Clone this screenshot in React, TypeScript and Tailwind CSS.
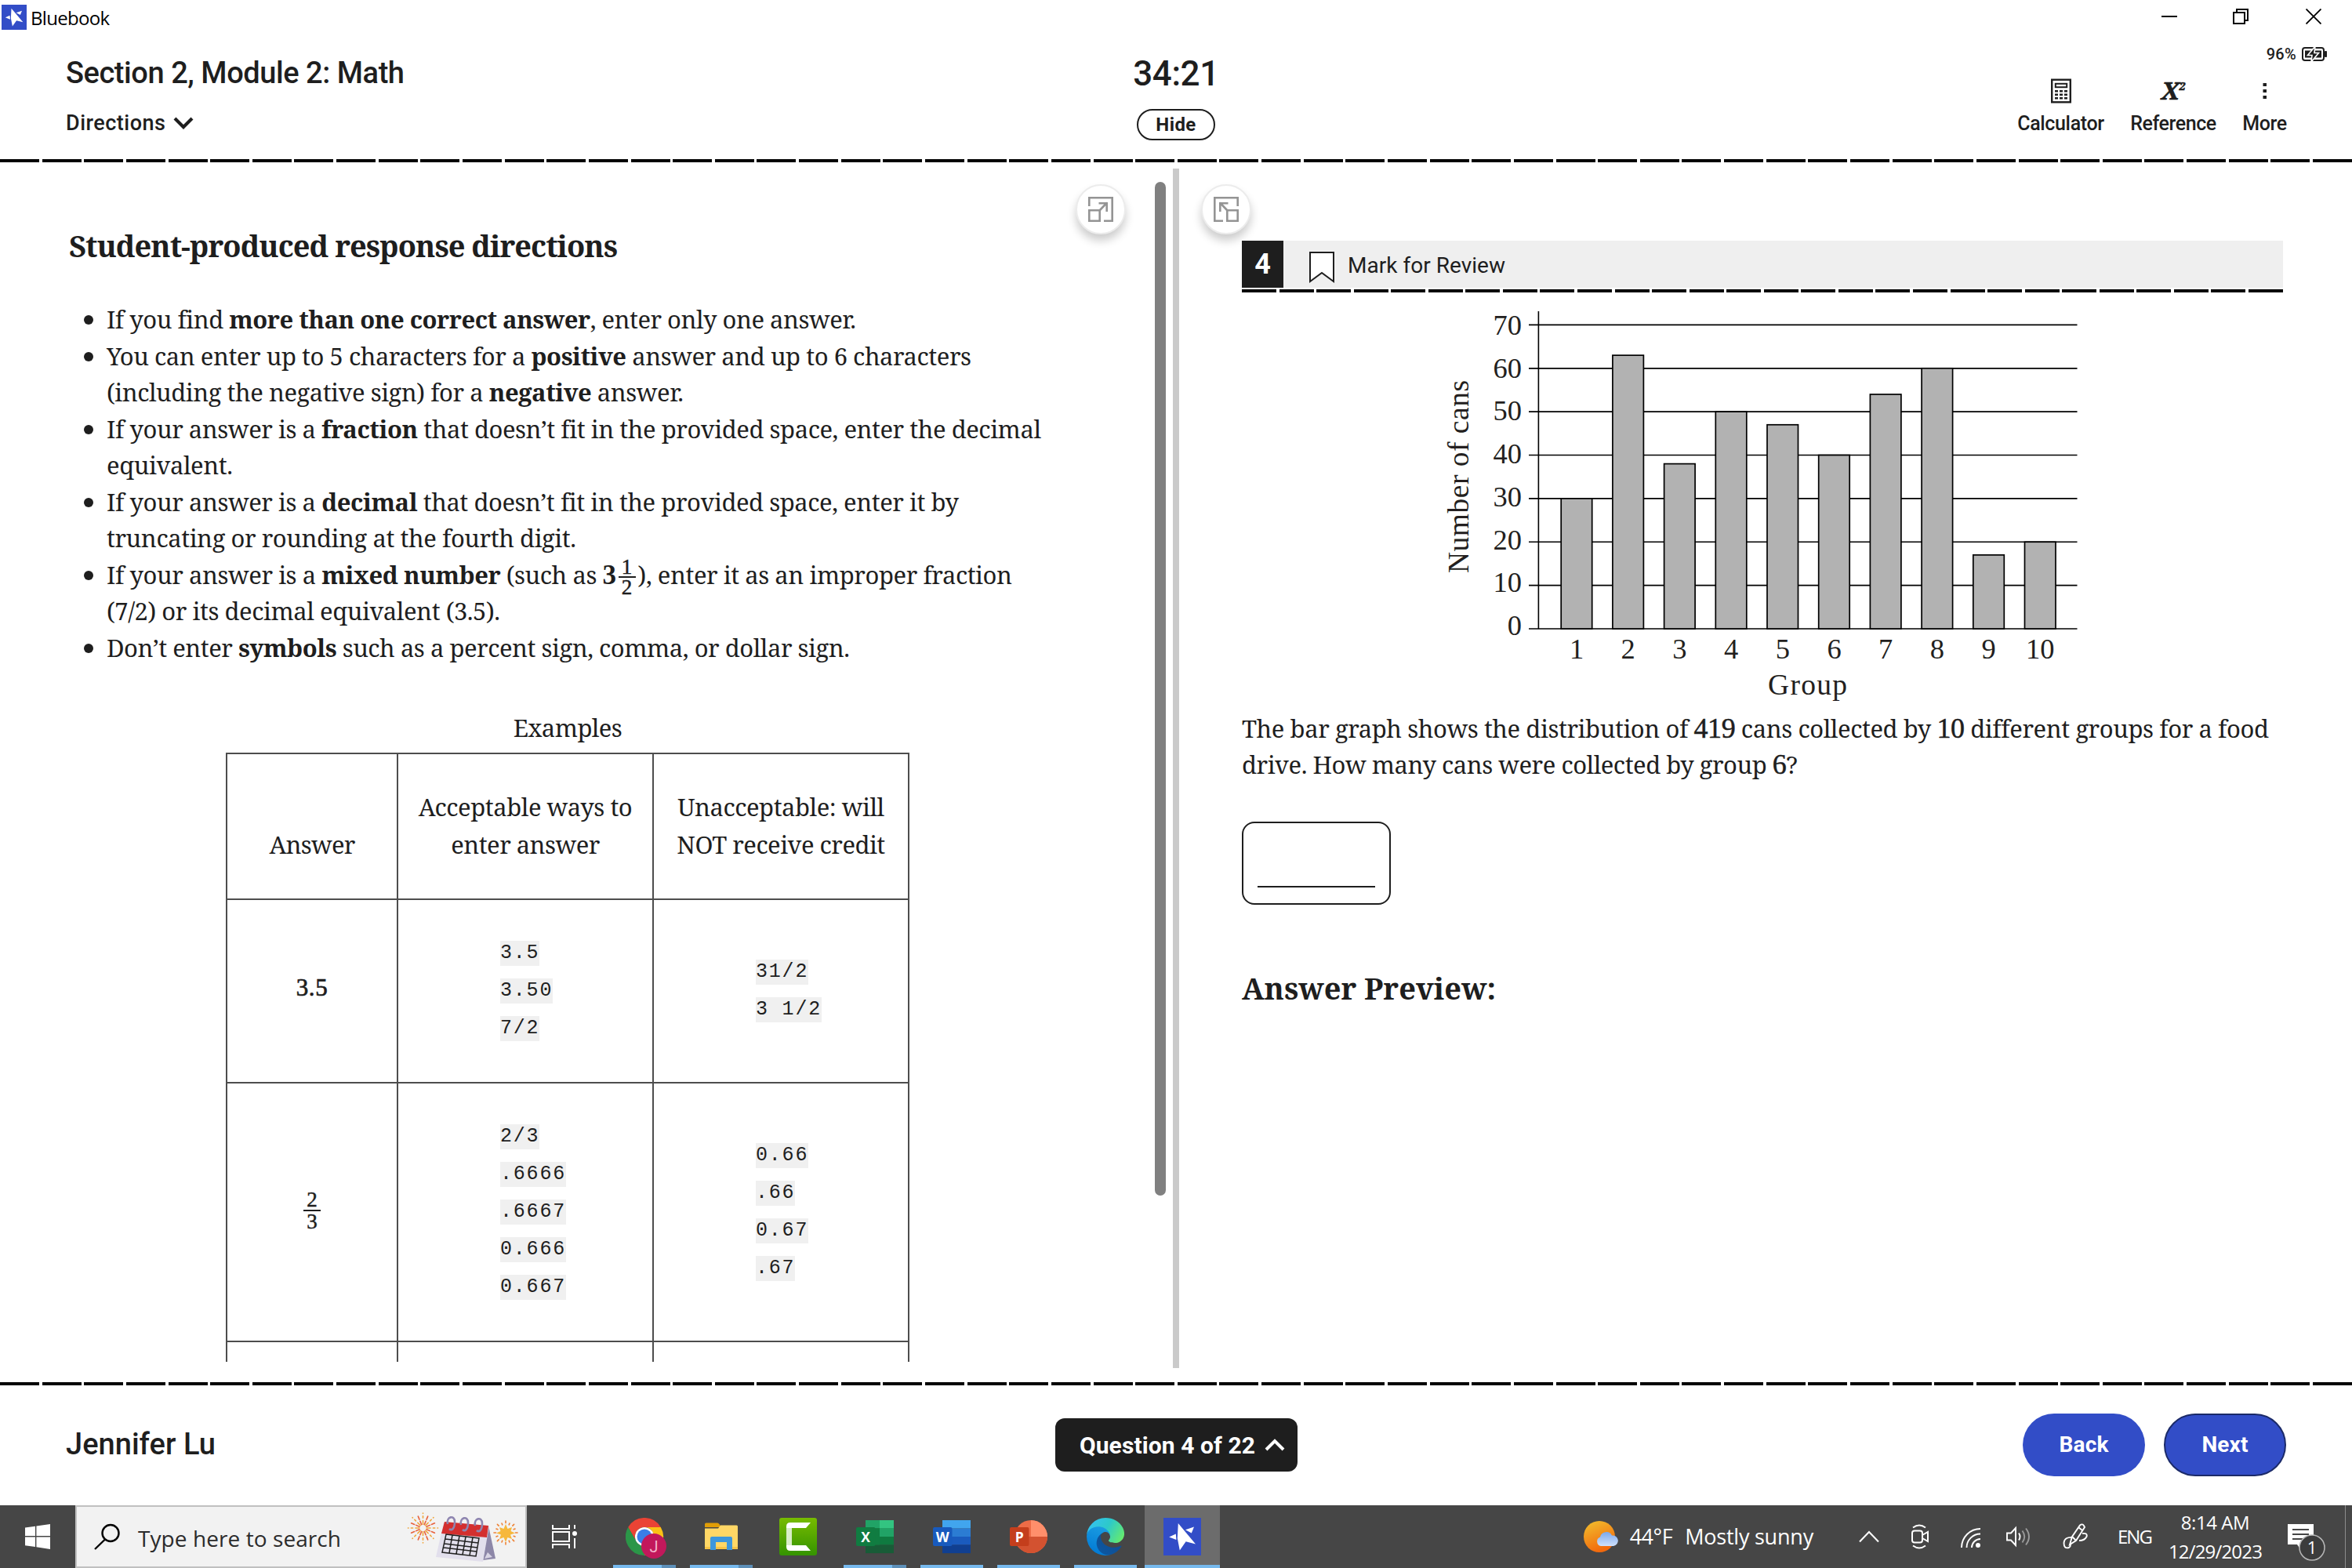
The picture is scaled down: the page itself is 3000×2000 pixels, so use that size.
import React, { useLayoutEffect, useRef } from "react";

type FitProps = { w: number; className?: string; children: React.ReactNode };

/** One line of text, tracked so that it fills exactly `w` pixels. */
function Fit({ w, className = "", children }: FitProps) {
  const ref = useRef<HTMLSpanElement>(null);
  useLayoutEffect(() => {
    const el = ref.current;
    if (!el) return;
    const count = Math.max(1, (el.textContent ?? "").length - 1);
    let spacing = 0;
    el.style.letterSpacing = "0px";
    for (let i = 0; i < 3; i++) {
      spacing += (w + spacing - el.getBoundingClientRect().width) / count;
      el.style.letterSpacing = `${spacing}px`;
    }
  }, [w]);
  return (
    <span ref={ref} className={`inline-block whitespace-pre ${className}`}>
      {children}
    </span>
  );
}

function Star({ className }: { className: string }) {
  return (
    <svg viewBox="0 0 48 48" className={className}>
      <rect width="48" height="48" fill="#324dc7" />
      <g fill="#fff">
        <path d="M18.8 7 41 33.4 28.6 30.2 20.8 41.4 17.8 26Z" />
        <path d="M7.2 24.4 15.8 20.6 16.4 28Z" />
        <path d="M39 11.6 35.8 19.6 28 15.2Z" />
      </g>
    </svg>
  );
}

function TitleBar() {
  return (
    <div className="flex h-[44px] shrink-0 items-center pl-[2px] font-['Open_Sans',sans-serif] text-black">
      <Star className="h-8 w-8" />
      <Fit w={101} className="ml-[5px] mt-[2px] text-[24px] leading-[42px]">Bluebook</Fit>
      <div className="mb-[2px] ml-auto mr-[39px] flex items-center">
        <svg viewBox="0 0 20 20" className="h-5 w-5" stroke="#000" strokeWidth="2">
          <path d="M0 10H20" />
        </svg>
        <svg viewBox="0 0 20 20" className="ml-[71px] h-5 w-5" fill="none" stroke="#000" strokeWidth="2">
          <path d="M1 5H15V19H1ZM5 5V1H19V15H15" />
        </svg>
        <svg viewBox="0 0 20 20" className="ml-[73px] h-5 w-5" stroke="#000" strokeWidth="1.8">
          <path d="M.5 .5 19.5 19.5M19.5 .5 .5 19.5" />
        </svg>
      </div>
    </div>
  );
}

function Header() {
  return (
    <header className="grid h-[159px] shrink-0 grid-cols-[1fr_200px_1fr] font-medium text-[#1e1e1e]">
      <div className="flex flex-col pl-[84px] pt-[23px]">
        <Fit w={432} className="self-start text-[38px] leading-[52px]">Section 2, Module 2: Math</Fit>
        <div className="mt-[16px] flex items-center">
          <Fit w={127} className="text-[27px] leading-[44px]">Directions</Fit>
          <svg viewBox="0 0 26 16" className="ml-[9px] h-4 w-[26px]" fill="none" stroke="#1e1e1e" strokeWidth="4.2">
            <path d="M2 2 13 13 24 2" />
          </svg>
        </div>
      </div>
      <div className="flex flex-col items-center pt-[23px]">
        <Fit w={110} className="text-[44px] leading-[54px]">34:21</Fit>
        <div className="mt-[18px] flex h-[40px] w-[100px] items-center justify-center rounded-full border-2 border-[#1e1e1e] font-bold">
          <Fit w={51} className="text-[24px] leading-[36px]">Hide</Fit>
        </div>
      </div>
      <div className="flex flex-col items-end">
        <div className="mr-[32px] mt-[13px] flex h-[24px] items-center">
          <Fit w={38} className="mr-[7px] text-[20px] leading-[24px]">96%</Fit>
          <svg viewBox="0 0 32 18" className="h-[18px] w-8">
            <rect x="1" y="1" width="27" height="16" rx="3" fill="none" stroke="#1e1e1e" strokeWidth="2" />
            <rect x="29" y="5" width="3" height="8" rx="1" fill="#1e1e1e" />
            <rect x="4" y="4.500" width="21" height="9" fill="#1e1e1e" />
            <path d="M17 -1 7.500 10.500H13L12 19 21.500 7.500H16Z" fill="#1e1e1e" stroke="#fff" strokeWidth="1.600" />
          </svg>
        </div>
        <div className="mr-[83px] mt-[19px] flex text-[25px] leading-[34px]">
          <div className="flex w-[111px] flex-col items-center">
            <svg viewBox="0 0 26 32" className="h-8 w-[26px]" fill="#1e1e1e">
              <rect x="1.200" y="1.700" width="23.600" height="28.600" fill="none" stroke="#1e1e1e" strokeWidth="2.400" />
              <rect x="5.800" y="6.800" width="14.400" height="4.400" fill="none" stroke="#1e1e1e" strokeWidth="2" />
              <path d="M5 15H9V17.500H5ZM11 15H15V17.500H11ZM17 15H21V17.500H17ZM5 19.500H9V22H5ZM11 19.500H15V22H11ZM17 19.500H21V22H17ZM5 24H9V26.500H5ZM11 24H15V26.500H11ZM17 24H21V26.500H17Z" />
            </svg>
            <Fit w={111} className="mt-[9px]">Calculator</Fit>
          </div>
          <div className="ml-[33px] flex w-[110px] flex-col items-center">
            <span className="flex h-8 items-start font-['Noto_Serif',serif] font-bold italic leading-[31px] [-webkit-text-stroke:0.6px_#1e1e1e]">
              <span className="text-[31px]">X</span>
              <span className="text-[14px] leading-[20px]">2</span>
            </span>
            <Fit w={110} className="mt-[9px]">Reference</Fit>
          </div>
          <div className="ml-[33px] flex w-[57px] flex-col items-center">
            <svg viewBox="0 0 6 32" className="h-8 w-[6px]" fill="#1e1e1e">
              <path d="M.5 6H5V10H.5ZM.5 14H5V18H.5ZM.5 22H5V26H.5Z" />
            </svg>
            <Fit w={57} className="mt-[9px]">More</Fit>
          </div>
        </div>
      </div>
    </header>
  );
}

function FullDash() {
  return (
    <div className="h-1 w-full shrink-0 bg-[repeating-linear-gradient(90deg,#000_0px,#000_50px,#fff_50px,#fff_53.636px)]" />
  );
}

function PaneButton({ flip = false, className }: { flip?: boolean; className: string }) {
  return (
    <div
      className={`absolute flex h-[64px] w-[64px] items-center justify-center rounded-full border-2 border-[#ececec] bg-white shadow-[0_8px_12px_rgba(0,0,0,0.2)] ${className}`}
    >
      <svg
        viewBox="0 0 32 32"
        className={flip ? "h-8 w-8 -scale-x-100" : "h-8 w-8"}
        fill="none"
        stroke="#949494"
        strokeWidth="2.600"
      >
        <path d="M1.300 12V1.300H30.700V30.700H20" />
        <path d="M1.300 17.300H14.700V30.700H1.300ZM14.500 17.500 24 7.500M13.500 8.300H23.700V19" />
      </svg>
    </div>
  );
}

const bullets: { lines: { w: number; body: React.ReactNode }[] }[] = [
  { lines: [{ w: 956, body: <>If you find <b>more than one correct answer</b>, enter only one answer.</> }] },
  {
    lines: [
      { w: 1103, body: <>You can enter up to 5 characters for a <b>positive</b> answer and up to 6 characters</> },
      { w: 736, body: <>(including the negative sign) for a <b>negative</b> answer.</> },
    ],
  },
  {
    lines: [
      { w: 1192, body: <>If your answer is a <b>fraction</b> that doesn’t fit in the provided space, enter the decimal</> },
      { w: 161, body: <>equivalent.</> },
    ],
  },
  {
    lines: [
      { w: 1087, body: <>If your answer is a <b>decimal</b> that doesn’t fit in the provided space, enter it by</> },
      { w: 599, body: <>truncating or rounding at the fourth digit.</> },
    ],
  },
  {
    lines: [
      {
        w: 1155,
        body: (
          <>
            If your answer is a <b>mixed number</b> (such as{" "}
            <span className="font-['Liberation_Serif',serif] text-[35px] font-bold">3</span>
            <span className="mx-[3px] inline-flex w-[22px] flex-col items-center align-middle font-['Liberation_Serif',serif] text-[27px] leading-[24px] tracking-normal [-webkit-text-stroke:0.5px_#1e1e1e]">
              <span className="w-full border-b-2 border-[#1e1e1e] text-center">1</span>
              <span>2</span>
            </span>
            ), enter it as an improper fraction
          </>
        ),
      },
      { w: 502, body: <>(7/2) or its decimal equivalent (3.5).</> },
    ],
  },
  { lines: [{ w: 948, body: <>Don’t enter <b>symbols</b> such as a percent sign, comma, or dollar sign.</> }] },
];

function Codes({ items }: { items: string[] }) {
  return (
    <div className="flex flex-col justify-center border-b-2 border-r-2 border-[#4d4d4d] pl-[130px]">
      {items.map((c) => (
        <div key={c} className="flex h-12 items-center">
          <code className="whitespace-pre bg-[#f0f0f0] font-['Liberation_Mono',monospace] text-[25px] leading-[32px] tracking-[1.800px]">{c}</code>
        </div>
      ))}
    </div>
  );
}

function HeadCell({ lines }: { lines: [string, number][] }) {
  return (
    <div className="flex flex-col items-center justify-end border-b-2 border-r-2 border-[#4d4d4d] pb-[45px]">
      {lines.map(([t, w]) => (
        <Fit key={t} w={w} className="leading-[48px]">{t}</Fit>
      ))}
    </div>
  );
}

function Directions() {
  return (
    <section className="relative flex h-full w-[1496px] shrink-0">
      <div className="h-[1530px] w-[1473px] overflow-hidden pt-[83px] font-['Noto_Serif','DejaVu_Serif_Condensed','DejaVu_Serif',serif] text-[31px] text-[#1e1e1e]">
        <h1 className="ml-[88px] h-[46px] text-[38px] font-bold leading-[46px]">
          <Fit w={700}>Student-produced response directions</Fit>
        </h1>
        <ul className="mt-[48px]">
          {bullets.map((b, i) => (
            <li key={i} className="flex pl-[107px]">
              <span className="mt-[18px] h-3 w-3 shrink-0 rounded-full bg-[#1e1e1e]" />
              <div className="ml-[17px] flex flex-col items-start">
                {b.lines.map((l) => (
                  <Fit key={l.w} w={l.w} className="h-[46.500px] leading-[46.500px]">{l.body}</Fit>
                ))}
              </div>
            </li>
          ))}
        </ul>
        <div className="ml-[288px] mt-[55px] w-[872px]">
          <div className="flex h-[56px] justify-center leading-[48px]">
            <Fit w={139}>Examples</Fit>
          </div>
          <div className="grid grid-cols-[218px_326px_326px] grid-rows-[186px_234px_330px_100px] border-l-2 border-t-2 border-[#4d4d4d]">
            <HeadCell lines={[["Answer", 110]]} />
            <HeadCell lines={[["Acceptable ways to", 273], ["enter answer", 190]]} />
            <HeadCell lines={[["Unacceptable: will", 264], ["NOT receive credit", 266]]} />
            <div className="flex items-center justify-center border-b-2 border-r-2 border-[#4d4d4d] pb-[7px] font-['Liberation_Serif',serif] text-[31px] [-webkit-text-stroke:0.7px_#1e1e1e]">
              <Fit w={40}>3.5</Fit>
            </div>
            <Codes items={["3.5", "3.50", "7/2"]} />
            <Codes items={["31/2", "3 1/2"]} />
            <div className="flex flex-col items-center justify-center border-b-2 border-r-2 border-[#4d4d4d] pb-[4px] font-['Liberation_Serif',serif] text-[27px] leading-[26px] [-webkit-text-stroke:0.5px_#1e1e1e]">
              <span className="w-[22px] border-b-2 border-[#1e1e1e] text-center">2</span>
              <span>3</span>
            </div>
            <Codes items={["2/3", ".6666", ".6667", "0.666", "0.667"]} />
            <Codes items={["0.66", ".66", "0.67", ".67"]} />
            <div className="border-r-2 border-[#4d4d4d]" />
            <div className="border-r-2 border-[#4d4d4d]" />
            <div className="border-r-2 border-[#4d4d4d]" />
          </div>
        </div>
      </div>
      <div className="mt-[25px] h-[1293px] w-[14px] rounded-full bg-[#808080]" />
      <PaneButton className="left-[1372px] top-[28px]" />
    </section>
  );
}

const cans = [30, 63, 38, 50, 47, 40, 54, 60, 17, 20];

function BarGraph() {
  const y = (v: number) => 802 - v * 5.537;
  return (
    <svg viewBox="1584 373 1328 533" className="h-[533px] w-[1328px] shrink-0">
      <g stroke="#000" strokeWidth="1.700">
        {[0, 10, 20, 30, 40, 50, 60, 70].map((v) => (
          <path key={v} d={`M1950 ${y(v)}H2649.500`} />
        ))}
        <path d="M1962.400 397V802" strokeWidth="1.600" />
        {cans.map((v, i) => (
          <rect key={i} x={1991.2 + i * 65.7} y={y(v)} width="39.500" height={v * 5.537} fill="#b2b2b2" />
        ))}
      </g>
      <g fill="#231f20" fontFamily="'Liberation Serif', serif" fontSize="36.500">
        {[0, 10, 20, 30, 40, 50, 60, 70].map((v, i) => (
          <text key={v} x="1941" y={810 - i * 54.72} textAnchor="end">{v}</text>
        ))}
        {cans.map((_, i) => (
          <text key={i} x={2011 + i * 65.7} y="840" textAnchor="middle">{i + 1}</text>
        ))}
        <text x="2255" y="886" textLength="101" fontSize="37.500">Group</text>
        <text transform="translate(1873 731) rotate(-90)" textLength="246" fontSize="37.500">Number of cans</text>
      </g>
    </svg>
  );
}

function Num({ children }: { children: React.ReactNode }) {
  return <span className="font-['Liberation_Serif',serif] text-[36px] [-webkit-text-stroke:0.5px_#1e1e1e]">{children}</span>;
}

function Question() {
  return (
    <section className="relative flex h-full flex-1 flex-col pl-[80px] pt-[100px] text-[#1e1e1e]">
      <PaneButton flip className="left-[28px] top-[28px]" />
      <div className="relative flex h-[60px] w-[1328px] items-center bg-[#efefef]">
        <div className="flex h-full w-[53px] items-center justify-center bg-[#1e1e1e] text-[36px] font-bold text-white">4</div>
        <svg viewBox="0 0 32 42" className="ml-[33px] mt-[8px] h-[42px] w-8" fill="#fff" stroke="#1e1e1e" strokeWidth="2">
          <path d="M1 2H31V39L16 28 1 39Z" />
        </svg>
        <Fit w={201} className="ml-[17px] mt-[3px] text-[28px] leading-[40px]">Mark for Review</Fit>
      </div>
      <div className="mt-[2px] h-1 w-[1328px] shrink-0 bg-[repeating-linear-gradient(90deg,#000_0px,#000_44px,#fff_44px,#fff_47.556px)]" />
      <BarGraph />
      <div className="flex flex-col items-start font-['Noto_Serif','DejaVu_Serif_Condensed','DejaVu_Serif',serif] text-[31px] leading-[46px]">
        <Fit w={1310} className="h-[46px]">
          The bar graph shows the distribution of <Num>419</Num> cans collected by <Num>10</Num> different groups for a food
        </Fit>
        <Fit w={709} className="h-[46px]">
          drive. How many cans were collected by group <Num>6</Num>?
        </Fit>
        <div className="mt-[50px] flex h-[106px] w-[190px] flex-col justify-end rounded-[16px] border-2 border-[#1e1e1e] px-[18px] pb-[20px]">
          <div className="h-[2px] bg-[#1e1e1e]" />
        </div>
        <Fit w={324} className="mt-[83px] text-[38px] font-bold">Answer Preview:</Fit>
      </div>
    </section>
  );
}

function Footer() {
  return (
    <footer className="grid h-[153px] shrink-0 grid-cols-[1fr_309px_1fr] text-[#1e1e1e]">
      <Fit w={191} className="ml-[84px] mt-[49px] justify-self-start text-[38px] font-medium leading-[52px]">Jennifer Lu</Fit>
      <div className="mt-[42px] flex h-[68px] items-center justify-center rounded-[12px] bg-[#1e1e1e] pl-[16px] text-[30px] font-bold text-white">
        <Fit w={224}>Question 4 of 22</Fit>
        <svg viewBox="0 0 26 16" className="ml-[12px] h-4 w-[26px]" fill="none" stroke="#fff" strokeWidth="4">
          <path d="M2 14 13 3 24 14" />
        </svg>
      </div>
      <div className="mr-[84px] mt-[36px] flex justify-end gap-[24px] text-[28px] font-bold text-white">
        <div className="flex h-[80px] w-[156px] items-center justify-center rounded-full bg-[#324dc7]">
          <Fit w={63}>Back</Fit>
        </div>
        <div className="flex h-[80px] w-[156px] items-center justify-center rounded-full border-2 border-[#1b2a68] bg-[#324dc7]">
          <Fit w={59}>Next</Fit>
        </div>
      </div>
    </footer>
  );
}

function Burst({ cx, cy, r, n, a, b }: { cx: number; cy: number; r: number; n: number; a: string; b: string }) {
  return (
    <g strokeLinecap="round" strokeWidth="1.600">
      {Array.from({ length: n }, (_, i) => (
        <g key={i} transform={`translate(${cx} ${cy}) rotate(${(360 / n) * i})`} stroke={i % 2 ? a : b}>
          <path d={`M0 ${-r * 0.25}V${-r * 0.5}M0 ${-r * (i % 2 ? 0.62 : 0.68)}V${-r * (i % 2 ? 0.85 : 0.8)}`} />
          {i % 2 === 0 && <path d={`M0 ${-r}V${-r + 0.5}`} />}
        </g>
      ))}
    </g>
  );
}

function SearchArt() {
  return (
    <svg viewBox="516 1924 148 72" className="h-[72px] w-[148px]">
      <Burst cx={539.5} cy={1949} r={19} n={16} a="#e8613c" b="#f0a63c" />
      <path d="M623 1946 632 1988 616 1990Z" fill="#8d87a8" />
      <path d="M622 1980 628 1986 618 1988Z" fill="#d8d4e4" />
      <path d="M566 1942 624 1946 616 1992 556 1986Z" fill="#e2dfec" />
      <path d="M567 1941 623 1946 621 1961 563 1956Z" fill="#d32f2f" />
      <path d="M569 1957 611 1962 607 1985 564 1980ZM568 1963 610 1968M567 1969 609 1974M566 1974 608 1979M577 1958 573 1981M586 1959 582 1982M594 1960 590 1983M603 1961 599 1984" fill="none" stroke="#222" strokeWidth="1.500" />
      <path d="M571 1944C569 1934 580 1932 580 1941S576 1953 573 1950M588 1945C586 1935 597 1933 597 1942S593 1954 590 1951M606 1946C604 1936 615 1934 615 1943S611 1955 608 1952" fill="none" stroke="#8f86b0" strokeWidth="2.600" />
      <path d="M645 1944 647.500 1950 653 1948 651.500 1953 657 1955.500 651 1957.500 653 1963 647.500 1961 645 1967 642.500 1961 637 1963 639 1957.500 633 1955.500 638.500 1953 637 1948 642.500 1950Z" fill="#f6b83c" />
      <g stroke="#ee8236" strokeWidth="1.600" strokeLinecap="round">
        {Array.from({ length: 16 }, (_, i) => (
          <path key={i} transform={`translate(645 1955) rotate(${i * 22.5})`} d={i % 2 ? "M0 -11V-13" : "M0 -12.500V-15"} />
        ))}
      </g>
    </svg>
  );
}

function Chrome() {
  return (
    <svg viewBox="0 0 52 52" className="ml-1 mt-1 h-[52px] w-[52px]">
      <path d="M24 12H44.800A24 24 0 0 0 3.200 12L13.600 30A12 12 0 0 1 24 12Z" fill="#ea4335" />
      <path d="M34.400 30 24 48A24 24 0 0 0 44.800 12H24A12 12 0 0 1 34.400 30Z" fill="#fbc116" />
      <path d="M13.600 30 3.200 12A24 24 0 0 0 24 48L34.400 30A12 12 0 0 1 13.600 30Z" fill="#2b9648" />
      <circle cx="24" cy="24" r="12" fill="#fff" />
      <circle cx="24" cy="24" r="9.500" fill="#3a7de8" />
      <circle cx="36" cy="36" r="16" fill="#c2185b" />
      <text x="36" y="43.500" textAnchor="middle" fontFamily="Roboto, sans-serif" fontSize="20" fill="#f3b3cb">J</text>
    </svg>
  );
}

function Explorer() {
  return (
    <svg viewBox="0 0 48 48" className="h-12 w-12">
      <path d="M3 8Q3 6.500 4.500 6.500H19Q20.500 6.500 21.500 8L24 12H3Z" fill="#e09d06" />
      <path d="M3 13.500H20L23 9.500H43.500Q45 9.500 45 11V40H3Z" fill="#ffd766" />
      <path d="M3 37H45V38.500Q45 40 43.500 40H4.500Q3 40 3 38.500Z" fill="#f6c445" />
      <path d="M10 41V26Q10 24 12 24H36Q38 24 38 26V41H31V31H17V41Z" fill="#3d97dc" />
    </svg>
  );
}

function Camtasia() {
  return (
    <svg viewBox="0 0 48 48" className="h-12 w-12">
      <defs>
        <linearGradient id="cam" x1="0" y1="0" x2="0" y2="1">
          <stop offset="0" stopColor="#77bb00" />
          <stop offset="1" stopColor="#349300" />
        </linearGradient>
      </defs>
      <rect width="48" height="48" rx="3" fill="url(#cam)" />
      <path d="M9 11 16 13V35L9 37Z" fill="#d9edc8" />
      <path d="M9 11Q9 6 14 6H40L34 13H9ZM9 35H34L40 42H14Q9 42 9 37Z" fill="#fff" />
    </svg>
  );
}

function Office({ letter, stripes, tile, round = false }: { letter: string; stripes: string[]; tile: string; round?: boolean }) {
  return (
    <svg viewBox="0 0 48 48" className="h-12 w-12">
      {round ? (
        <>
          <circle cx="27" cy="24" r="21" fill={stripes[0]} />
          <path d="M27 3A21 21 0 0 1 48 24H27Z" fill={stripes[1]} />
          <path d="M6 24A21 21 0 0 0 48 24Z" fill={stripes[2]} />
        </>
      ) : (
        <>
          {stripes.map((c, i) => (
            <rect key={c} x="12" y={3 + i * 10.5} width="36" height="10.600" fill={c} />
          ))}
          {letter === "X" && (
            <>
              <path d="M30 3H48V13.500H30Z" fill="#33c481" />
              <path d="M30 13.500H48V24H30Z" fill="#21a366" />
              <path d="M12 13.500H30V34.500H12Z" fill="#107c41" />
            </>
          )}
        </>
      )}
      <rect x="0" y="12" width="24.500" height="24" rx="2" fill={tile} />
      <text x="12.200" y="30.500" textAnchor="middle" fontFamily="'Open Sans', sans-serif" fontWeight="700" fontSize="17.500" fill="#fff">{letter}</text>
    </svg>
  );
}

function Edge() {
  return (
    <svg viewBox="0 0 256 256" className="h-12 w-12">
      <defs>
        <linearGradient id="e1" x1="0" y1="1" x2="1" y2="0">
          <stop offset="0" stopColor="#0c59a4" />
          <stop offset="1" stopColor="#114a8b" />
        </linearGradient>
        <linearGradient id="e2" x1="0.600" y1="0" x2="0.300" y2="1">
          <stop offset="0" stopColor="#1b9de2" />
          <stop offset="1" stopColor="#0078d4" />
        </linearGradient>
        <linearGradient id="e3" x1="0" y1="0.300" x2="1" y2="0.700">
          <stop offset="0" stopColor="#35c1f1" />
          <stop offset="0.500" stopColor="#2dc9c9" />
          <stop offset="1" stopColor="#66eb6e" />
        </linearGradient>
      </defs>
      <path fill="url(#e1)" d="M231.070 190.540c-3.400 1.800-6.900 3.400-10.500 4.700a101.500 101.500 0 0 1-35.900 6.500c-47.300 0-88.500-32.500-88.500-74.300.1-11.400 6.400-21.900 16.400-27.300-42.800 1.800-53.800 46.400-53.800 72.500 0 74 68.100 81.400 82.800 81.400 7.900 0 19.800-2.300 27-4.600l1.300-.4a128 128 0 0 0 66.600-52.800 4 4 0 0 0-5.400-5.700z" />
      <path fill="url(#e2)" d="M105.730 241.420a79.200 79.200 0 0 1-22.700-21.300 80.700 80.700 0 0 1 29.500-120c3.200-1.500 8.500-4.100 15.600-4a32.400 32.400 0 0 1 25.700 13 31.900 31.900 0 0 1 6.300 18.700c0-.2 24.500-79.600-80-79.600-43.900 0-80 41.700-80 78.200a130.200 130.200 0 0 0 12.100 56 128 128 0 0 0 156.400 67 75.600 75.600 0 0 1-62.800-8z" />
      <path fill="url(#e3)" d="M152.330 148.860c-.9 1-3.400 2.500-3.400 5.600 0 2.600 1.700 5.200 4.800 7.300 14.400 10.100 41.700 8.700 41.800 8.700 10.700 0 21.100-2.900 30.300-8.300a61.400 61.400 0 0 0 30.400-52.900c.3-22.400-8-37.300-11.300-43.900C223.530 23.860 177.720 0 128 0A128 128 0 0 0 0 126.200c.5-36.500 36.800-66 80-66 3.500 0 23.500.3 42 10.100 16.300 8.600 24.900 19 30.800 29.200 6.200 10.700 7.300 24.100 7.300 29.500 0 5.300-2.700 13.300-7.800 19.900z" />
    </svg>
  );
}

type AppMode = "idle" | "open" | "many" | "active";

function TaskApp({ mode, children }: { mode: AppMode; children: React.ReactNode }) {
  return (
    <div className={`flex h-20 w-24 flex-col items-center ${mode === "active" ? "bg-[#6c6c6c]" : ""}`}>
      <div className="flex h-[76px] items-center pt-1">{children}</div>
      {mode === "open" && <div className="h-1 w-20 bg-[#76b9ed]" />}
      {mode === "active" && <div className="h-1 w-24 bg-[#76b9ed]" />}
      {mode === "many" && (
        <div className="flex h-1 w-20">
          <div className="w-[62px] bg-[#76b9ed]" />
          <div className="flex-1 bg-[#5d8fb8]" />
        </div>
      )}
    </div>
  );
}

function Tray() {
  return (
    <div className="ml-auto flex h-full items-center text-[27px]">
      <svg viewBox="0 0 44 40" className="h-10 w-11">
        <defs>
          <linearGradient id="sun" x1="0" y1="0" x2="0.400" y2="1">
            <stop offset="0" stopColor="#f2c12e" />
            <stop offset="1" stopColor="#f2690d" />
          </linearGradient>
          <linearGradient id="cloud" x1="0" y1="0" x2="0" y2="1">
            <stop offset="0" stopColor="#7ba9ee" />
            <stop offset="1" stopColor="#cfe0fb" />
          </linearGradient>
        </defs>
        <circle cx="20" cy="20" r="20" fill="url(#sun)" />
        <path d="M22 32A6 6 0 0 1 21 20.500 8 8 0 0 1 36 18.500 6.800 6.800 0 0 1 38 32Z" fill="url(#cloud)" />
      </svg>
      <Fit w={55} className="ml-[15px] leading-[40px]">44°F</Fit>
      <Fit w={164} className="ml-[16px] leading-[40px]">Mostly sunny</Fit>
      <svg viewBox="0 0 26 16" className="ml-[58px] h-4 w-[26px]" fill="none" stroke="#fff" strokeWidth="2">
        <path d="M1 14.500 13 2 25 14.500" />
      </svg>
      <svg viewBox="0 0 24 32" className="ml-[40px] h-8 w-6" fill="none" stroke="#fff" strokeWidth="2">
        <rect x="2" y="8.500" width="13" height="15" rx="3" />
        <path d="M15 14 22 10V22L15 18M3 4.500Q11 -1.500 19 4.500M3 27.500Q11 33.500 19 27.500" />
      </svg>
      <svg viewBox="0 0 26 26" className="ml-[40px] mt-[4px] h-[26px] w-[26px]" fill="none" stroke="#fff" strokeWidth="1.900">
        <path d="M1 25A24 24 0 0 1 25 1M7.500 25A17.500 17.500 0 0 1 25 7.500M14 25A11 11 0 0 1 25 14" />
        <circle cx="22" cy="22" r="3" fill="#fff" stroke="none" />
      </svg>
      <svg viewBox="0 0 32 28" className="ml-[32px] h-7 w-8" fill="none" stroke="#fff" strokeWidth="1.900">
        <path d="M1 9.500H6L12 3V25L6 18.500H1Z" />
        <path d="M16 9.500Q19 14 16 18.500" />
        <path d="M20.500 6.500Q26 14 20.500 21.500M25 3.500Q33 14 25 24.500" stroke="#9a9a9a" />
      </svg>
      <svg viewBox="0 0 32 34" className="ml-[40px] h-[34px] w-8" fill="none" stroke="#fff" strokeWidth="1.900">
        <path d="M9 27 12 17 22 2.500Q25 0 27 3L28 5 17 22 9 27ZM12 17 17 22M20 5 25 9" />
        <path d="M13 18Q2 17 1.500 25 1.500 33 8 31 10 30 10 27M25 13Q32 12 30.500 17 28 22 21 22" />
      </svg>
      <Fit w={45} className="ml-[38px] text-[24px] leading-[40px]">ENG</Fit>
      <div className="ml-[21px] flex w-[121px] flex-col items-center text-[24px] leading-[37px]">
        <Fit w={88}>8:14 AM</Fit>
        <Fit w={120}>12/29/2023</Fit>
      </div>
      <svg viewBox="0 0 50 48" className="ml-[32px] mt-[14px] h-12 w-[50px]">
        <path d="M0 1H33V27H22L16 33 12 27H0Z" fill="#fff" />
        <path d="M6 8H27M6 14H27M6 20H20" stroke="#464646" strokeWidth="2" />
        <circle cx="31" cy="31" r="16" fill="#3c3c3c" stroke="#b5b5b5" strokeWidth="1.600" />
        <text x="31" y="39" textAnchor="middle" fontSize="22" fontFamily="'Open Sans', sans-serif" fill="#fff">1</text>
      </svg>
      <div className="ml-[23px] mr-[8px] h-20 w-px bg-[#8c8c8c]" />
    </div>
  );
}

function Taskbar() {
  return (
    <div className="flex h-20 shrink-0 items-center bg-[#464646] font-['Open_Sans',sans-serif] text-white">
      <svg viewBox="0 0 32 32" className="ml-8 h-8 w-8" fill="#fff">
        <path d="M0 4.500 13 2.700V15H0ZM14.400 2.500 32 0V15H14.400ZM0 16.400H13V29L0 27.300ZM14.400 16.400H32V32L14.400 29.300Z" />
      </svg>
      <div className="ml-8 flex h-20 w-[576px] items-center border-2 border-[#c0c0c0] bg-[#f2f2f2] text-[#2b2b2b]">
        <svg viewBox="0 0 34 34" className="ml-[22px] h-[34px] w-[34px]" fill="none" stroke="#000" strokeWidth="2.400">
          <circle cx="21" cy="12.500" r="10.500" />
          <path d="M14 20.500 1 33" />
        </svg>
        <Fit w={259} className="ml-[22px] mt-[3px] text-[28px] leading-[40px]">Type here to search</Fit>
        <div className="ml-auto mr-[6px]">
          <SearchArt />
        </div>
      </div>
      <TaskApp mode="idle">
        <svg viewBox="0 0 32 30" className="h-[30px] w-8" fill="none" stroke="#fff" strokeWidth="2">
          <path d="M1 0V5H22V0M1 9H22V21H1ZM1 30V25H22V30M29 0V5M29 17V30" />
          <circle cx="29" cy="11" r="3" fill="#fff" stroke="none" />
        </svg>
      </TaskApp>
      <div className="ml-[6px] flex gap-[2px]">
        <TaskApp mode="many"><Chrome /></TaskApp>
        <TaskApp mode="many"><Explorer /></TaskApp>
        <TaskApp mode="idle"><Camtasia /></TaskApp>
        <TaskApp mode="many">
          <Office letter="X" tile="#107c41" stripes={["#21a366", "#107c41", "#0f7a40", "#185c37"]} />
        </TaskApp>
        <TaskApp mode="open">
          <Office letter="W" tile="#185abd" stripes={["#41a5ee", "#2b7cd3", "#1a5bbe", "#103f91"]} />
        </TaskApp>
        <TaskApp mode="open">
          <Office letter="P" tile="#c43e1c" stripes={["#ed6c47", "#ff8f6b", "#d35230"]} round />
        </TaskApp>
        <TaskApp mode="open"><Edge /></TaskApp>
        <TaskApp mode="active"><Star className="h-12 w-12" /></TaskApp>
      </div>
      <Tray />
    </div>
  );
}

export default function App() {
  return (
    <div className="flex h-[2000px] w-[3000px] flex-col overflow-hidden bg-white font-['Roboto',sans-serif]">
      <TitleBar />
      <Header />
      <FullDash />
      <main className="flex h-[1556px] shrink-0">
        <Directions />
        <div className="mt-2 h-[1530px] w-2 shrink-0 bg-[#cacaca]" />
        <Question />
      </main>
      <FullDash />
      <Footer />
      <Taskbar />
    </div>
  );
}
